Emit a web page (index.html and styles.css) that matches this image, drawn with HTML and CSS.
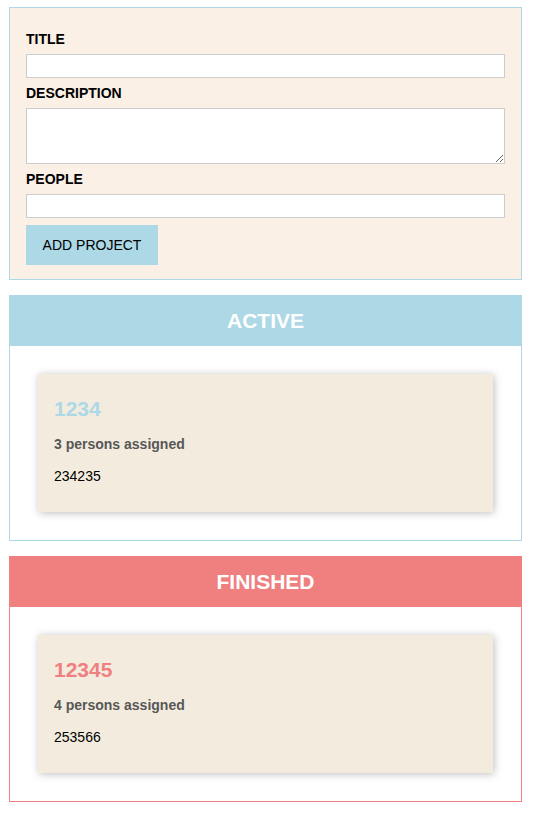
FILE: index.html
```html
<!DOCTYPE html>
<html lang="en">
<head>
<meta charset="utf-8">
<title>Project Manager</title>
<link rel="stylesheet" href="styles.css">
</head>
<body>
<div class="app">
  <form class="user-input">
    <label class="field-label" for="title">TITLE</label>
    <input class="field" type="text" id="title">
    <label class="field-label" for="description">DESCRIPTION</label>
    <textarea class="field field-area" id="description"></textarea>
    <label class="field-label" for="people">PEOPLE</label>
    <input class="field" type="number" id="people">
    <button class="add-btn" type="button">ADD PROJECT</button>
  </form>

  <section class="projects projects-active">
    <header class="projects-header"><h2 class="projects-title">ACTIVE</h2></header>
    <ul class="project-list">
      <li class="project-item">
        <h2 class="project-name">1234</h2>
        <h3 class="project-people">3 persons assigned</h3>
        <p class="project-desc">234235</p>
      </li>
    </ul>
  </section>

  <section class="projects projects-finished">
    <header class="projects-header"><h2 class="projects-title">FINISHED</h2></header>
    <ul class="project-list">
      <li class="project-item">
        <h2 class="project-name">12345</h2>
        <h3 class="project-people">4 persons assigned</h3>
        <p class="project-desc">253566</p>
      </li>
    </ul>
  </section>
</div>
</body>
</html>
```

FILE: styles.css
```css
* {
  box-sizing: border-box;
}

html {
  font-family: "Liberation Sans", Arial, sans-serif;
  font-size: 14px;
}

body {
  margin: 0;
  background: #fff;
  color: #000;
}

.app {
  padding: 7px 13px 0 9px;
  display: flex;
  flex-direction: column;
  gap: 14px;
}

.user-input {
  background: #faf0e6;
  border: 1px solid #add8e6;
  padding: 16px 16px 14px;
  margin: 0;
}

.field-label {
  display: block;
  font-weight: bold;
  margin: 7px 0;
  line-height: 16px;
}

.field {
  display: block;
  width: 100%;
  margin: 7px 0;
  border: 1px solid #ccc;
  background: #fff;
  font: inherit;
  padding: 2px 6px;
  height: 24px;
}

.field-area {
  height: 56px;
  resize: vertical;
}

.add-btn {
  font: inherit;
  background: #add8e6;
  border: 1px solid #add8e6;
  color: #000;
  padding: 0 15px;
  height: 40px;
  width: 132px;
  margin: 0;
  display: block;
  cursor: pointer;
}

.projects {
  border: 1px solid #add8e6;
  margin-top: 1px;
}

.projects-header {
  background: #add8e6;
  height: 50px;
  display: flex;
  justify-content: center;
  align-items: center;
}

.projects-finished {
  border-color: #f08080;
}

.projects-finished .projects-header {
  background: #f08080;
}

.projects-title {
  margin: 0;
  color: #fff;
  font-size: 21px;
  font-weight: bold;
}

.project-list {
  list-style: none;
  margin: 0;
  padding: 28px;
}

.project-item {
  background: #f3ecde;
  box-shadow: 1px 1px 8px rgba(0, 0, 0, 0.26);
  padding: 16px;
  display: flow-root;
}

.project-name {
  color: #add8e6;
  font-size: 21px;
  line-height: 24px;
  margin: 7px 0;
}

.projects-finished .project-name {
  color: #f08080;
}

.project-people {
  color: #575757;
  font-size: 14px;
  line-height: 17px;
  margin: 15px 0;
}

.project-desc {
  margin: 15px 0 12px;
  line-height: 16px;
}
```
